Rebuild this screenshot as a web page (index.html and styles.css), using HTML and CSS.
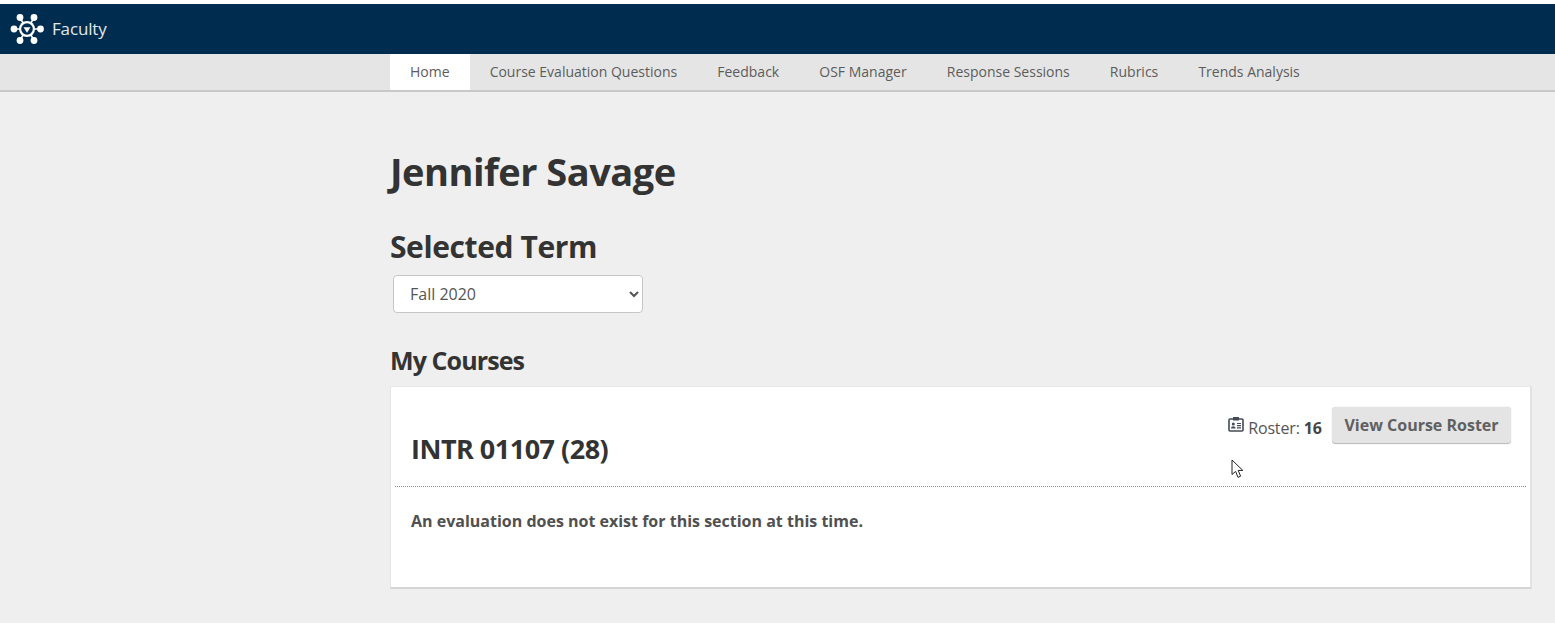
FILE: index.html
```html
<!DOCTYPE html>
<html lang="en">
<head>
<meta charset="utf-8">
<title>Faculty</title>
<link rel="stylesheet" href="styles.css">
</head>
<body>
<header class="topbar">
  <svg class="logo" viewBox="0 0 36 32" width="36" height="32" aria-hidden="true">
    <g stroke="#fff" stroke-width="1.6" fill="none">
      <path d="M18 16 L11 5 M18 16 L25 5 M18 16 L5 16 M18 16 L32 16 M18 16 L11 27 M18 16 L25 27"/>
    </g>
    <g fill="#fff">
      <circle cx="11" cy="4.5" r="3.4"/><circle cx="25" cy="4.5" r="3.4"/>
      <circle cx="5" cy="16" r="3.4"/><circle cx="31.5" cy="16" r="3.4"/>
      <circle cx="11" cy="27.5" r="3.4"/><circle cx="25" cy="27.5" r="3.4"/>
      <circle cx="18" cy="16" r="8"/>
    </g>
    <circle cx="18" cy="16" r="5.8" fill="#002d4f"/>
    <path d="M14.5 14.2 h7 L18 19.8 Z" fill="#fff"/>
  </svg>
  <span class="brand">Faculty</span>
</header>
<nav class="navbar">
  <ul class="navlist">
    <li class="navitem active">Home</li>
    <li class="navitem">Course Evaluation Questions</li>
    <li class="navitem">Feedback</li>
    <li class="navitem">OSF Manager</li>
    <li class="navitem">Response Sessions</li>
    <li class="navitem">Rubrics</li>
    <li class="navitem">Trends Analysis</li>
  </ul>
</nav>
<main class="content">
  <h1 class="name">Jennifer Savage</h1>
  <h2 class="term">Selected Term</h2>
  <select class="term-select"><option>Fall 2020</option></select>
  <h3 class="courses">My Courses</h3>
  <section class="card">
    <div class="card-head">
      <h4 class="course-title">INTR 01107 (28)</h4>
      <div class="roster">
        <svg class="roster-icon" viewBox="0 0 16 16" width="16" height="17" aria-hidden="true">
          <rect x="1" y="2.5" width="14" height="12" rx="1" fill="none" stroke="#444b55" stroke-width="1.6"/>
          <rect x="5" y="0.5" width="6" height="3.5" fill="#444b55"/>
          <circle cx="5.3" cy="7.6" r="1.5" fill="#444b55"/>
          <path d="M3 12 c0-3 4.6-3 4.6 0 Z" fill="#444b55"/>
          <path d="M9 7 h4 M9 9.2 h4 M9 11.4 h4" stroke="#444b55" stroke-width="1.2"/>
        </svg>
        <span class="roster-text">Roster: <b>16</b></span>
        <button class="roster-btn" type="button">View Course Roster</button>
      </div>
    </div>
    <p class="notice">An evaluation does not exist for this section at this time.</p>
    <svg class="cursor" viewBox="0 0 13 20" width="13" height="20" aria-hidden="true">
      <path d="M1 1 V15.5 L4.6 12.4 L7 18.4 L9.6 17.2 L7.2 11.4 H11.8 Z" fill="#fff" stroke="#222" stroke-width="1"/>
    </svg>
  </section>
</main>
</body>
</html>
```
FILE: styles.css
```css
* { box-sizing: border-box; }
html, body { margin: 0; padding: 0; }
body {
  height: 623px;
  overflow: hidden;
  background: #efefef;
  padding-top: 4px;
  font-family: "Open Sans", "Noto Sans", sans-serif;
  color: #333;
  position: relative;
}
body::before {
  content: "";
  position: absolute;
  top: 0; left: 0; right: 0;
  height: 4px;
  background: #fff;
}
.topbar {
  height: 50px;
  background: #002d4f;
  display: flex;
  align-items: center;
  padding-left: 9px;
}
.logo { margin-right: 7px; }
.brand { color: #e4e8ec; font-size: 17px; letter-spacing: -0.15px; padding-bottom: 2px; }
.navbar {
  height: 38px;
  background: #e5e5e5;
  border-bottom: 2px solid #c8c8c8;
  padding-left: 390px;
}
.navlist { list-style: none; margin: 0; padding: 0; display: flex; height: 36px; }
.navitem {
  padding: 0 20.05px;
  font-size: 14px;
  line-height: 36px;
  color: #5c5c5c;
}
.navitem.active { background: #fff; padding: 0 20px; }
.content { padding-left: 390px; padding-right: 24px; }
.name {
  margin: 53px 0 0 0;
  font-size: 38px;
  line-height: 52px;
  font-weight: 700;
  letter-spacing: -0.5px;
  color: #333;
}
.term {
  margin: 30px 0 0;
  font-size: 30px;
  line-height: 40px;
  font-weight: 700;
  letter-spacing: -0.4px;
  color: #333;
}
.term-select {
  display: block;
  margin: 8px 0 0 3px;
  width: 250px;
  height: 38px;
  padding: 0 8px 0 12px;
  font-family: inherit;
  font-size: 16px;
  color: #555;
  background: #fff;
  border: 1px solid #c6c6c6;
  border-radius: 4px;
}
.courses {
  margin: 30px 0 0 0;
  font-size: 25px;
  line-height: 34px;
  font-weight: 700;
  letter-spacing: -0.9px;
  color: #333;
}
.card {
  position: relative;
  margin: 9px 0 0 0;
  width: 1142px;
  height: 203px;
  background: #fff;
  border-bottom: 2px solid #d4d4d4;
  border-right: 2px solid #e2e2e2;
  border-left: 1px solid #e4e4e4;
  border-top: 1px solid #e8e8e8;
  padding: 0 4px;
}
.card-head {
  height: 100px;
  border-bottom: 1px dotted #8a8a8a;
  display: flex;
  justify-content: space-between;
  padding: 0 15px 0 16px;
}
.course-title {
  margin: 42px 0 0;
  font-size: 27px;
  line-height: 40px;
  font-weight: 700;
  letter-spacing: -0.5px;
  color: #333;
}
.roster { display: flex; align-items: flex-start; padding-top: 20px; }
.roster-icon { margin: 9px 4px 0 0; }
.roster-text { font-size: 16px; line-height: 36px; margin-top: 3px; color: #555; letter-spacing: -0.15px; margin-right: 10px; white-space: nowrap; }
.roster-text b { color: #444; font-weight: 700; letter-spacing: 0; }
.roster-btn {
  width: 179px;
  height: 37px;
  font-family: inherit;
  font-size: 16px;
  font-weight: 700;
  color: #606060;
  background: #e4e4e4;
  border: 0;
  border-bottom: 1px solid #bdbdbd;
  border-radius: 4px;
  padding: 0;
  box-shadow: 0 0 1px #bbb;
}
.notice {
  margin: 23px 0 0 16px;
  font-size: 16px;
  line-height: 22px;
  font-weight: 700;
  color: #505050;
}
.cursor { position: absolute; left: 840px; top: 72px; }
```
